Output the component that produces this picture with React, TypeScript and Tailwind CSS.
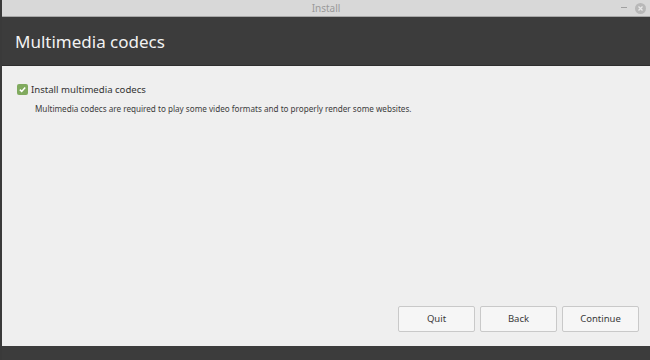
import React from "react";

export default function App() {
  const font = { fontFamily: '"Noto Sans", "Open Sans", sans-serif' };
  return (
    <div className="w-[650px] h-[360px] flex flex-col bg-[#efefef] overflow-hidden border-l-2 border-[#3a3a3a]" style={font}>
      <div className="h-[17px] shrink-0 bg-[#d8d8d8] border-b border-[#a8a8a8] flex items-center relative">
        <div className="flex-1 text-center text-[10px] leading-none text-[#9a9a9a]">Install</div>
        <div className="absolute right-[23px] top-[7px] w-[6px] h-[1px] bg-[#a0a0a0]" />
        <div className="absolute right-[4px] top-[3px] w-[11px] h-[11px] rounded-full bg-[#b8b8b8] flex items-center justify-center">
          <svg width="7" height="7" viewBox="0 0 7 7"><path d="M1.5 1.5L5.5 5.5M5.5 1.5L1.5 5.5" stroke="#e8e8e8" strokeWidth="1.3" /></svg>
        </div>
      </div>
      <div className="h-[49px] shrink-0 bg-[#3c3c3c] flex items-center px-[13px] border-b border-[#2e2e2e]">
        <span className="text-[17px] text-[#f2f2f2] leading-none">Multimedia codecs</span>
      </div>
      <div className="flex-1 flex flex-col">
        <div className="flex items-center gap-[3px] px-[15px] pt-[18px]">
          <div className="w-[11px] h-[11px] rounded-[2px] bg-[#80aa5e] flex items-center justify-center">
            <svg width="9" height="9" viewBox="0 0 9 9"><path d="M1.8 4.6L3.7 6.4L7.2 2.6" stroke="#ffffff" strokeWidth="1.5" fill="none" /></svg>
          </div>
          <span className="text-[9.6px] text-[#333333] leading-none">Install multimedia codecs</span>
        </div>
        <div className="mt-[10px] pl-[33px] text-[8.15px] text-[#3c3c3c] leading-none">
          Multimedia codecs are required to play some video formats and to properly render some websites.
        </div>
        <div className="flex-1" />
        <div className="flex justify-end gap-[5px] pr-[11px] mb-[14px]">
          {["Quit", "Back", "Continue"].map((t) => (
            <div key={t} className="w-[77px] h-[26px] rounded-[2px] border border-[#c9c9c9] bg-[#f6f6f6] flex items-center justify-center text-[9.5px] text-[#3a3a3a]">
              {t}
            </div>
          ))}
        </div>
      </div>
      <div className="h-[14px] shrink-0 bg-[#3c3c3c]" />
    </div>
  );
}
